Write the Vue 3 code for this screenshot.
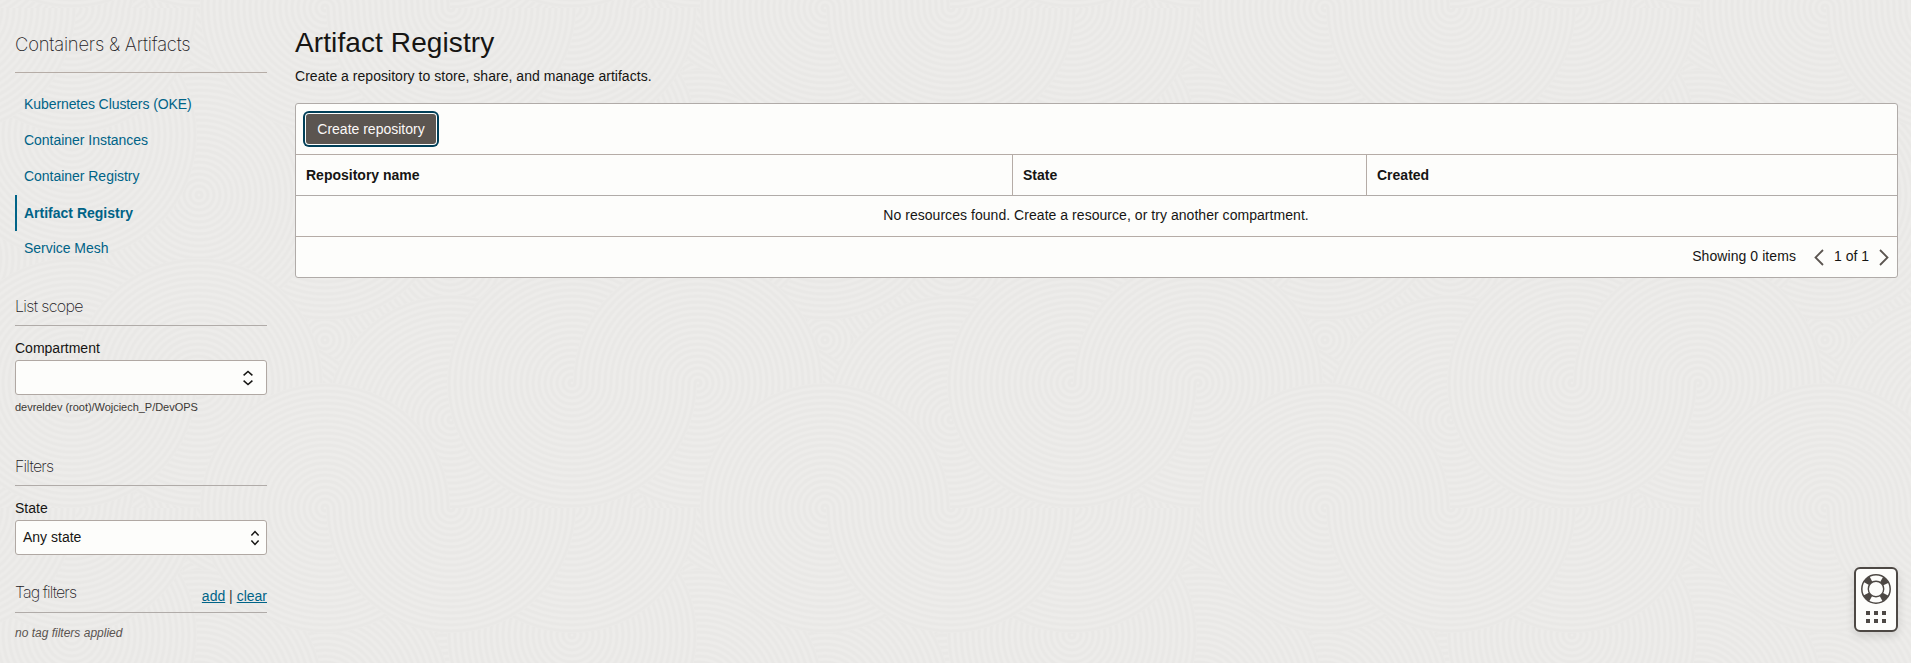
<script setup>
const links = ['Kubernetes Clusters (OKE)', 'Container Instances', 'Container Registry', 'Artifact Registry', 'Service Mesh']

// One 500 x 500 wallpaper tile: half discs of concentric rings, painted back to front.
// 'u' is an upper half, 'l' a lower half; neighbouring halves interlock into S curves.
const TILE = 500
const R = 125
const halves = [
  [325, 340, 'u'], [325, 340, 'l'], [200, 90, 'u'], [200, 90, 'l'], [450, 90, 'u'], [450, 90, 'l'],
  [262, 460, 'u'], [262, 460, 'l'], [10, 480, 'u'], [10, 480, 'l'],
  [75, 133, 'u'], [325, 133, 'u'], [75, 133, 'l'], [200, 258, 'u'], [450, 258, 'u'], [200, 258, 'l'], [450, 258, 'l'],
  [325, 195, 'u'], [199, 195, 'u'], [325, 195, 'l'], [199, 195, 'l'],
  [451, 420, 'u'], [451, 420, 'l'],
  [72, 135, 'u'], [72, 135, 'l'],
  [72, 8, 'l'], [198, 383, 'l'], [72, 383, 'u'],
  [325, 8, 'l'], [451, 8, 'l'], [325, 8, 'u'],
  [198, 383, 'u'], [72, 383, 'l']
]
const arc = (x, y, r, side) => `M${x - r} ${y}A${r} ${r} 0 0 ${side === 'u' ? 1 : 0} ${x + r} ${y}`
const shapes = halves.flatMap(([x, y, side]) => {
  const out = []
  for (const dx of [-TILE, 0, TILE]) {
    for (const dy of [-TILE, 0, TILE]) {
      const cx = x + dx
      const cy = y + dy
      if (cx < -R || cx > TILE + R || cy < -R || cy > TILE + R) continue
      let rings = ''
      for (let r = 3; r < R; r += 6) rings += arc(cx, cy, r, side)
      out.push({ fill: arc(cx, cy, R, side) + 'Z', rings })
    }
  }
  return out
})
</script>

<template>
  <div class="page">
    <svg class="wallpaper" width="1911" height="663" aria-hidden="true">
      <defs>
        <pattern id="swirl" width="500" height="500" patternUnits="userSpaceOnUse">
          <g v-for="(s, i) in shapes" :key="i">
            <path :d="s.fill" fill="#edecea" />
            <path :d="s.rings" fill="none" stroke="#ebeae8" stroke-width="3.4" />
            <path :d="s.rings" fill="none" stroke="#e9e8e6" stroke-width="1.8" />
          </g>
        </pattern>
      </defs>
      <rect width="1911" height="663" fill="url(#swirl)" />
    </svg>

    <aside class="side">
      <h2 class="side-title"><span>Containers &amp; Artifacts</span></h2>
      <nav>
        <a v-for="l in links" :key="l" :class="{ active: l === 'Artifact Registry' }">{{ l }}</a>
      </nav>

      <h3 class="scope"><span>List scope</span></h3>
      <label>Compartment</label>
      <div class="select wide">
        <span></span>
        <svg width="12" height="16" viewBox="0 0 12 16"><path d="M1.6 5.4 6 1.5l4.4 3.9M1.6 10.6 6 14.5l4.4-3.9" /></svg>
      </div>
      <p class="path">devreldev (root)/Wojciech_P/DevOPS</p>

      <h3 class="filters"><span>Filters</span></h3>
      <label>State</label>
      <div class="select">
        <span>Any state</span>
        <svg width="10" height="16" viewBox="0 0 10 16"><path d="M1.4 5.4 5 1.5l3.6 3.9M1.4 10.6 5 14.5l3.6-3.9" /></svg>
      </div>

      <h3 class="tags"><span>Tag filters</span><small><a>add</a> | <a>clear</a></small></h3>
      <p class="none">no tag filters applied</p>
    </aside>

    <main>
      <h1>Artifact Registry</h1>
      <p class="intro">Create a repository to store, share, and manage artifacts.</p>
      <section class="panel">
        <div class="toolbar"><button>Create repository</button></div>
        <div class="head"><b>Repository name</b><b>State</b><b>Created</b></div>
        <div class="empty">No resources found. Create a resource, or try another compartment.</div>
        <div class="foot">
          <span class="count">Showing 0 items</span>
          <svg width="10" height="17" viewBox="0 0 10 17"><path d="M9 1 1.5 8.5 9 16" /></svg>
          <span class="pageno">1 of 1</span>
          <svg width="10" height="17" viewBox="0 0 10 17"><path d="M1 1l7.5 7.5L1 16" /></svg>
        </div>
      </section>
    </main>

    <div class="help">
      <svg width="30" height="30" viewBox="0 0 30 30">
        <circle cx="15" cy="15" r="11" fill="none" stroke="#fdfdfb" stroke-width="7" />
        <circle cx="15" cy="15" r="10.9" fill="none" stroke="#4d4844" stroke-width="6.6" stroke-dasharray="6.2 10.92" stroke-dashoffset="-5.46" />
        <circle cx="15" cy="15" r="14.2" fill="none" stroke="#4d4844" stroke-width="1.5" />
        <circle cx="15" cy="15" r="7.7" fill="#fdfdfb" stroke="#4d4844" stroke-width="1.4" />
      </svg>
      <div class="dots"><i v-for="n in 6" :key="n"></i></div>
    </div>
  </div>
</template>

<style>
body { margin: 0; background: #edecea; }
</style>

<style scoped>
.page { position: relative; box-sizing: border-box; width: 1911px; height: 663px; overflow: hidden; display: flex; gap: 28px; padding: 0 13px 0 15px; font: 14px/20px "Liberation Sans", Arial, sans-serif; color: #161513; }
.wallpaper { position: absolute; inset: 0; }
.side, main { position: relative; }
.side { width: 252px; flex: none; }
main { flex: 1; }
h1, h2, h3, p { margin: 0; font-weight: 400; }
.side-title { box-sizing: border-box; height: 73px; padding-top: 30px; border-bottom: 1px solid #b5aca6; font: 200 18.4px/28px Inter, sans-serif; letter-spacing: -.2px; color: #24211f; }
nav { box-sizing: border-box; padding-top: 14px; height: 201px; }
nav a { display: flex; align-items: center; box-sizing: border-box; height: 36px; padding: 0 0 2px 9px; color: #006387; letter-spacing: -.03px; }
nav a:first-child { letter-spacing: -.08px; }
nav a.active { border-left: 2px solid #006387; padding: 0 0 0 7px; font-weight: 700; letter-spacing: 0; }
h3 { display: flex; justify-content: space-between; box-sizing: border-box; height: 30px; border-bottom: 1px solid #b0aba8; font: 200 16px/20px Inter, sans-serif; letter-spacing: -.65px; color: #24211f; }
.scope { margin-top: 22px; }
label { display: block; padding-top: 12px; height: 22px; }
.select { box-sizing: border-box; height: 35px; border: 1px solid #b0a8a3; border-radius: 3px; background: #fdfdfb; display: flex; align-items: center; justify-content: space-between; padding: 0 6px 0 7px; }
.select.wide { padding-right: 12px; }
.select span { padding-bottom: 1px; }
.select svg { margin-top: 1px; }
.select path { fill: none; stroke: #161513; stroke-width: 1.5; }
.path { font-size: 11px; line-height: 16px; padding-top: 4px; color: #3b3835; letter-spacing: -.03px; }
.filters { margin-top: 41px; letter-spacing: -.8px; }
.tags { margin-top: 27px; height: 31px; letter-spacing: -.9px; }
.tags small { font: 14px/20px "Liberation Sans", sans-serif; letter-spacing: 0; padding-top: 4px; color: #3b3835; }
.tags small a { color: #006387; text-decoration: underline; }
.none { font-size: 12px; font-style: italic; padding-top: 10px; color: #5a5450; }
h1 { font-size: 28px; line-height: 36px; padding-top: 25px; letter-spacing: .1px; }
.intro { padding-top: 5px; height: 37px; letter-spacing: .03px; }
.panel { box-sizing: border-box; height: 175px; border: 1px solid #b0aba8; border-radius: 3px; background: #fdfdfb; }
.toolbar { box-sizing: border-box; height: 51px; border-bottom: 1px solid #b5aca6; display: flex; align-items: center; padding-left: 10px; }
button { width: 130px; height: 30px; padding: 0; border: 0; border-radius: 3px; background: #5b5550; color: #fbf9f8; font: 14px/20px "Liberation Sans", sans-serif; box-shadow: 0 0 0 1px #fdfdfb, 0 0 0 3px #003f58; }
.head { display: grid; grid-template-columns: 716px 354px 1fr; height: 40px; border-bottom: 1px solid #b0aba8; line-height: 41px; }
.head b { padding-left: 10px; border-left: 1px solid #b5aca6; }
.head b:first-child { border: 0; }
.empty { height: 40px; border-bottom: 1px solid #b5aca6; line-height: 39px; text-align: center; letter-spacing: .045px; padding-right: 1px; }
.foot { height: 40px; display: flex; align-items: center; justify-content: flex-end; padding-right: 8px; }
.foot span { padding-bottom: 2px; }
.foot svg { margin-top: 1px; }
.foot path { fill: none; stroke: #5b5550; stroke-width: 1.8; }
.count { margin-right: 18px; letter-spacing: .07px; }
.pageno { margin: 0 10px; }
.help { position: absolute; left: 1854px; top: 567px; box-sizing: border-box; width: 44px; height: 65px; border: 2px solid #4d4844; border-radius: 6px; background: #fdfdfb; box-shadow: 0 4px 10px rgba(0,0,0,.12); padding-top: 5px; display: flex; flex-direction: column; align-items: center; }
.dots { margin-top: 7px; display: grid; grid-template-columns: repeat(3, 4px); gap: 4px; }
.dots i { width: 4px; height: 4px; background: #4d4844; }
</style>
